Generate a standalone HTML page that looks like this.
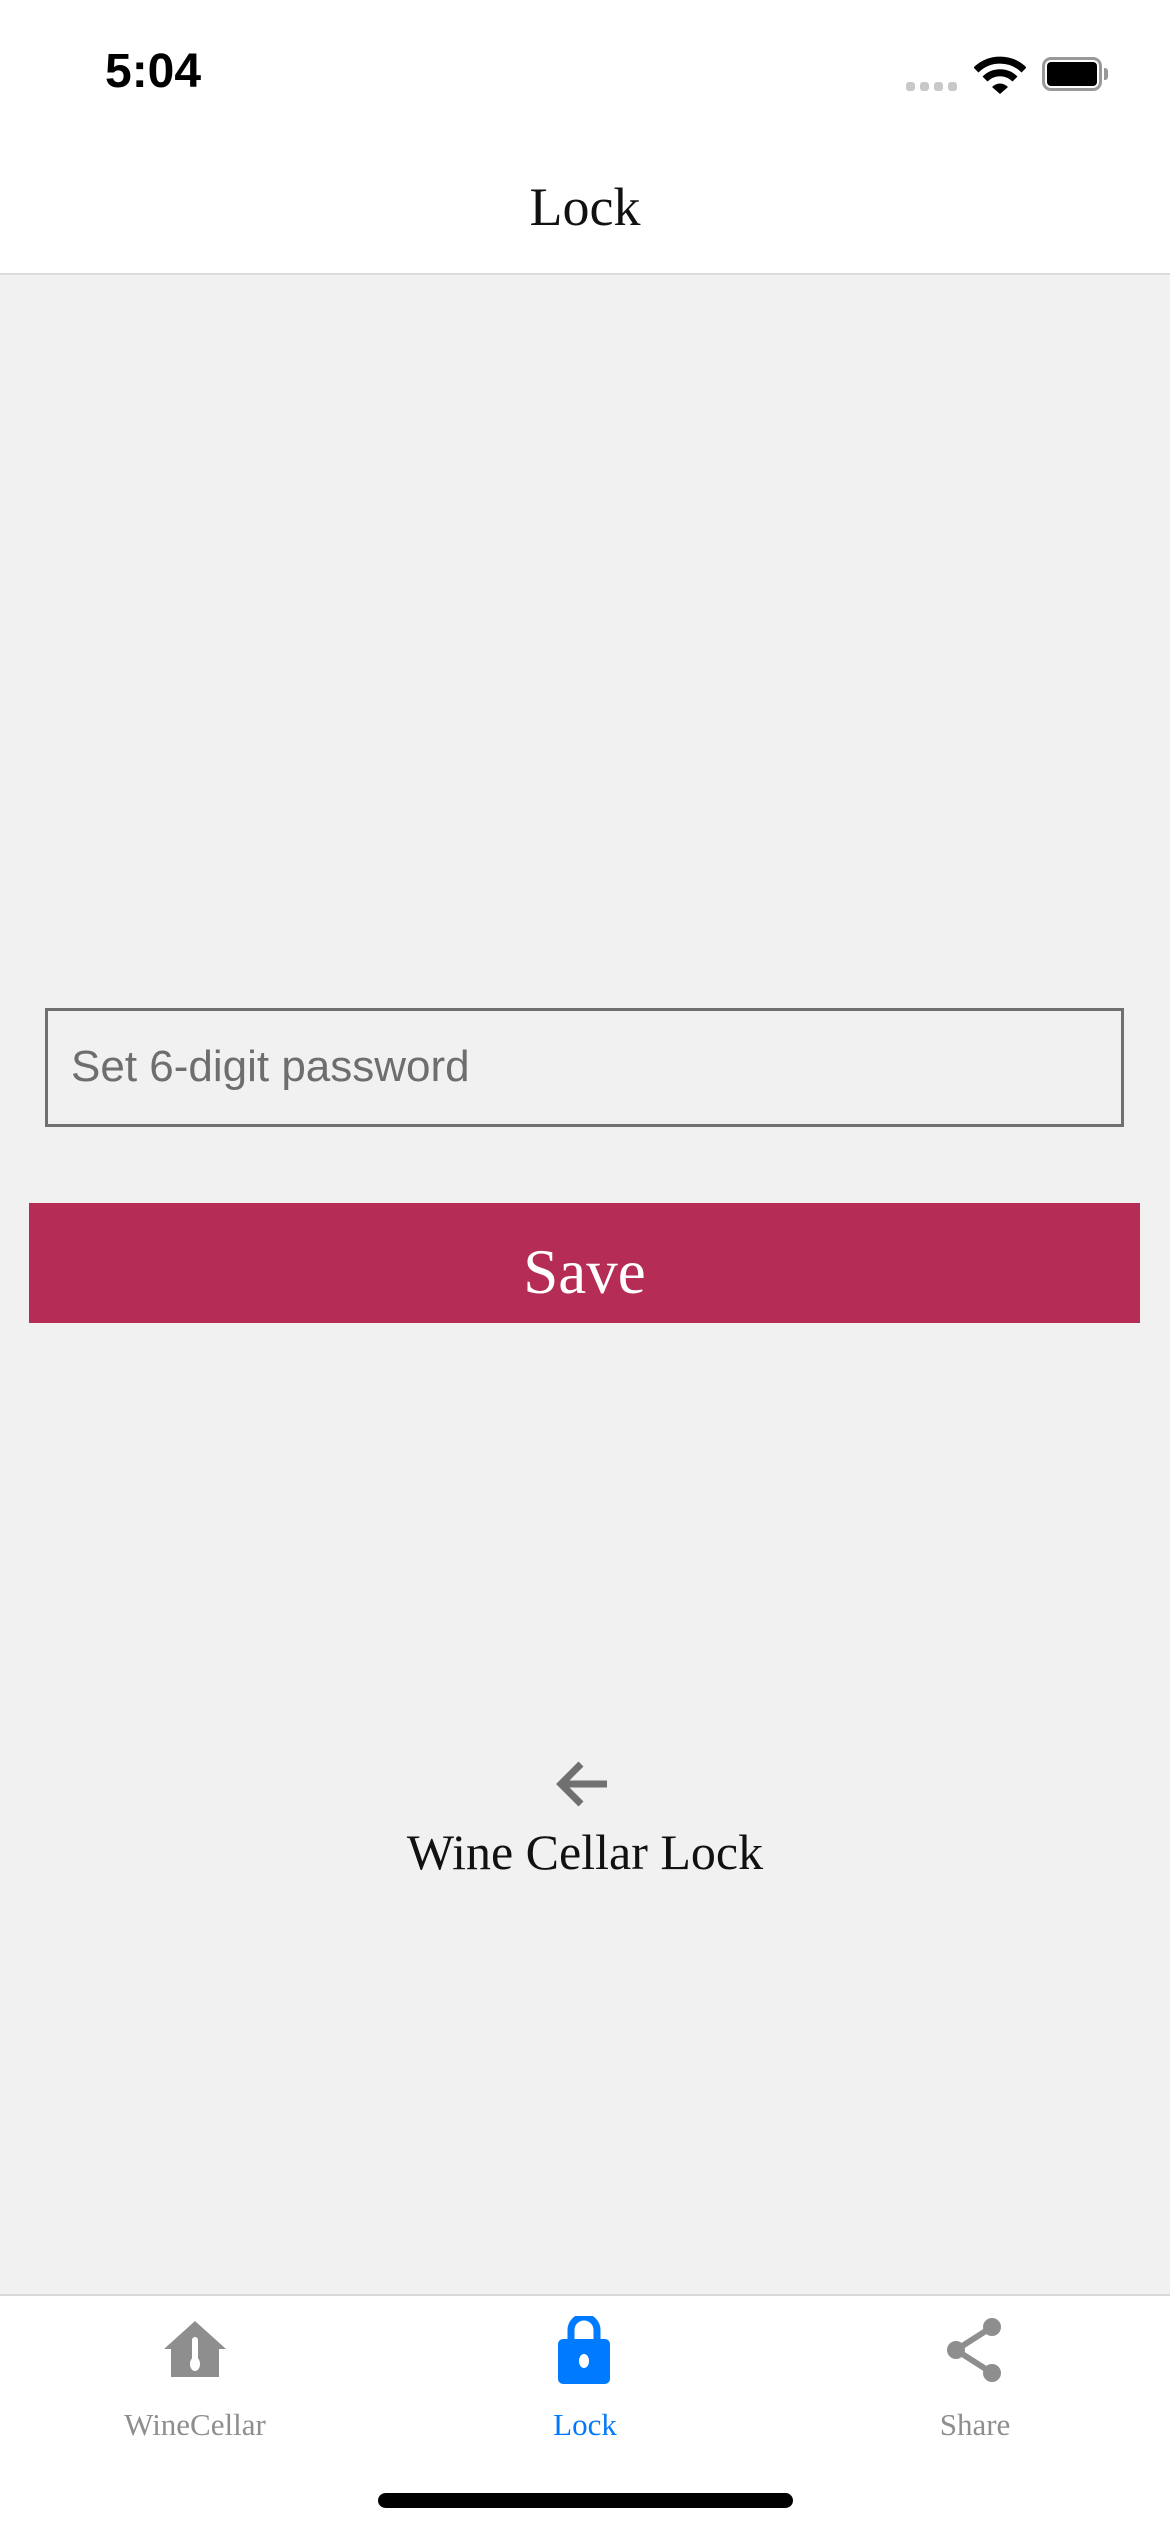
<!DOCTYPE html>
<html><head><meta charset="utf-8"><style>
html,body{margin:0;padding:0}
body{width:1170px;height:2532px;position:relative;background:#f1f1f1;overflow:hidden;font-family:"Liberation Serif",serif}
.abs{position:absolute}
</style></head><body>
<div class="abs" style="left:0;top:0;width:1170px;height:273px;background:#fff;border-bottom:2px solid #dcdcdc"></div>
<div class="abs" style="left:105px;top:44px;font:bold 48px 'Liberation Sans',sans-serif;color:#000">5:04</div>
<div class="abs" style="left:906px;top:82px;width:54px;height:9px">
 <span class="abs" style="left:0;width:9px;height:9px;border-radius:3px;background:#c8c8c8"></span>
 <span class="abs" style="left:14px;width:9px;height:9px;border-radius:3px;background:#c8c8c8"></span>
 <span class="abs" style="left:28px;width:9px;height:9px;border-radius:3px;background:#c8c8c8"></span>
 <span class="abs" style="left:42px;width:9px;height:9px;border-radius:3px;background:#c8c8c8"></span>
</div>
<svg class="abs" style="left:974px;top:56px" width="52" height="40" viewBox="0 0 52 40">
 <path d="M2 14 A34 34 0 0 1 50 14" stroke="#000" stroke-width="7" fill="none"/>
 <path d="M11 23 A21 21 0 0 1 41 23" stroke="#000" stroke-width="7" fill="none"/>
 <path d="M18 31 L26 38 L34 31 A11 11 0 0 0 18 31Z" fill="#000"/>
</svg>
<div class="abs" style="left:1042px;top:57px;width:referencepx;"></div>
<div class="abs" style="left:1042px;top:57px;width:60px;height:34px;border:3px solid #999;border-radius:9px;box-sizing:border-box"></div>
<div class="abs" style="left:1047px;top:62px;width:50px;height:24px;background:#000;border-radius:4px"></div>
<div class="abs" style="left:1104px;top:68px;width:4px;height:12px;background:#999;border-radius:0 3px 3px 0"></div>
<div class="abs" style="left:0;top:176px;width:1170px;text-align:center;font-size:54px;color:#111">Lock</div>

<div class="abs" style="left:45px;top:1008px;width:1079px;height:119px;border:3px solid #707070;box-sizing:border-box"></div>
<div class="abs" style="left:71px;top:1042px;font:44px 'Liberation Sans',sans-serif;color:#6e6e6e">Set 6-digit password</div>
<div class="abs" style="left:29px;top:1203px;width:1111px;height:120px;background:#b52d55"></div>
<div class="abs" style="left:29px;top:1236px;width:1111px;text-align:center;font-size:63px;color:#fff">Save</div>

<svg class="abs" style="left:555px;top:1760px" width="54" height="48" viewBox="0 0 54 48">
 <path d="M52 24 H6 M26 4 L6 24 L26 44" stroke="#707070" stroke-width="7" fill="none"/>
</svg>
<div class="abs" style="left:0;top:1823px;width:1170px;text-align:center;font-size:50px;color:#111">Wine Cellar Lock</div>

<div class="abs" style="left:0;top:2294px;width:1170px;height:238px;background:#fff;border-top:2px solid #d8d8d8"></div>
<svg class="abs" style="left:164px;top:2321px" width="62" height="56" viewBox="0 0 62 56">
 <path d="M31 0 L62 28 L55 28 L55 56 L7 56 L7 28 L0 28 Z" fill="#8e8e8e"/>
 <rect x="28" y="16" width="6" height="26" rx="3" fill="#fff"/>
 <ellipse cx="31" cy="43" rx="5" ry="7" fill="#fff"/>
</svg>
<svg class="abs" style="left:558px;top:2316px" width="52" height="68" viewBox="0 0 52 68">
 <path d="M13 27 V14 A13 13 0 0 1 39 14 V27" stroke="#007aff" stroke-width="7" fill="none"/>
 <rect x="0" y="23" width="52" height="45" rx="5" fill="#007aff"/>
 <ellipse cx="26" cy="45" rx="5" ry="7" fill="#fff"/>
</svg>
<svg class="abs" style="left:944px;top:2318px" width="60" height="64" viewBox="0 0 60 64">
 <path d="M48 9 L12 32 L48 55" stroke="#8e8e8e" stroke-width="6" fill="none"/>
 <circle cx="48" cy="9" r="9" fill="#8e8e8e"/>
 <circle cx="12" cy="32" r="9" fill="#8e8e8e"/>
 <circle cx="48" cy="55" r="9" fill="#8e8e8e"/>
</svg>
<div class="abs" style="left:45px;top:2407px;width:300px;text-align:center;font-size:31px;color:#8e8e8e">WineCellar</div>
<div class="abs" style="left:435px;top:2407px;width:300px;text-align:center;font-size:31px;color:#007aff">Lock</div>
<div class="abs" style="left:825px;top:2407px;width:300px;text-align:center;font-size:31px;color:#8e8e8e">Share</div>
<div class="abs" style="left:378px;top:2493px;width:415px;height:15px;background:#000;border-radius:8px"></div>
</body></html>
